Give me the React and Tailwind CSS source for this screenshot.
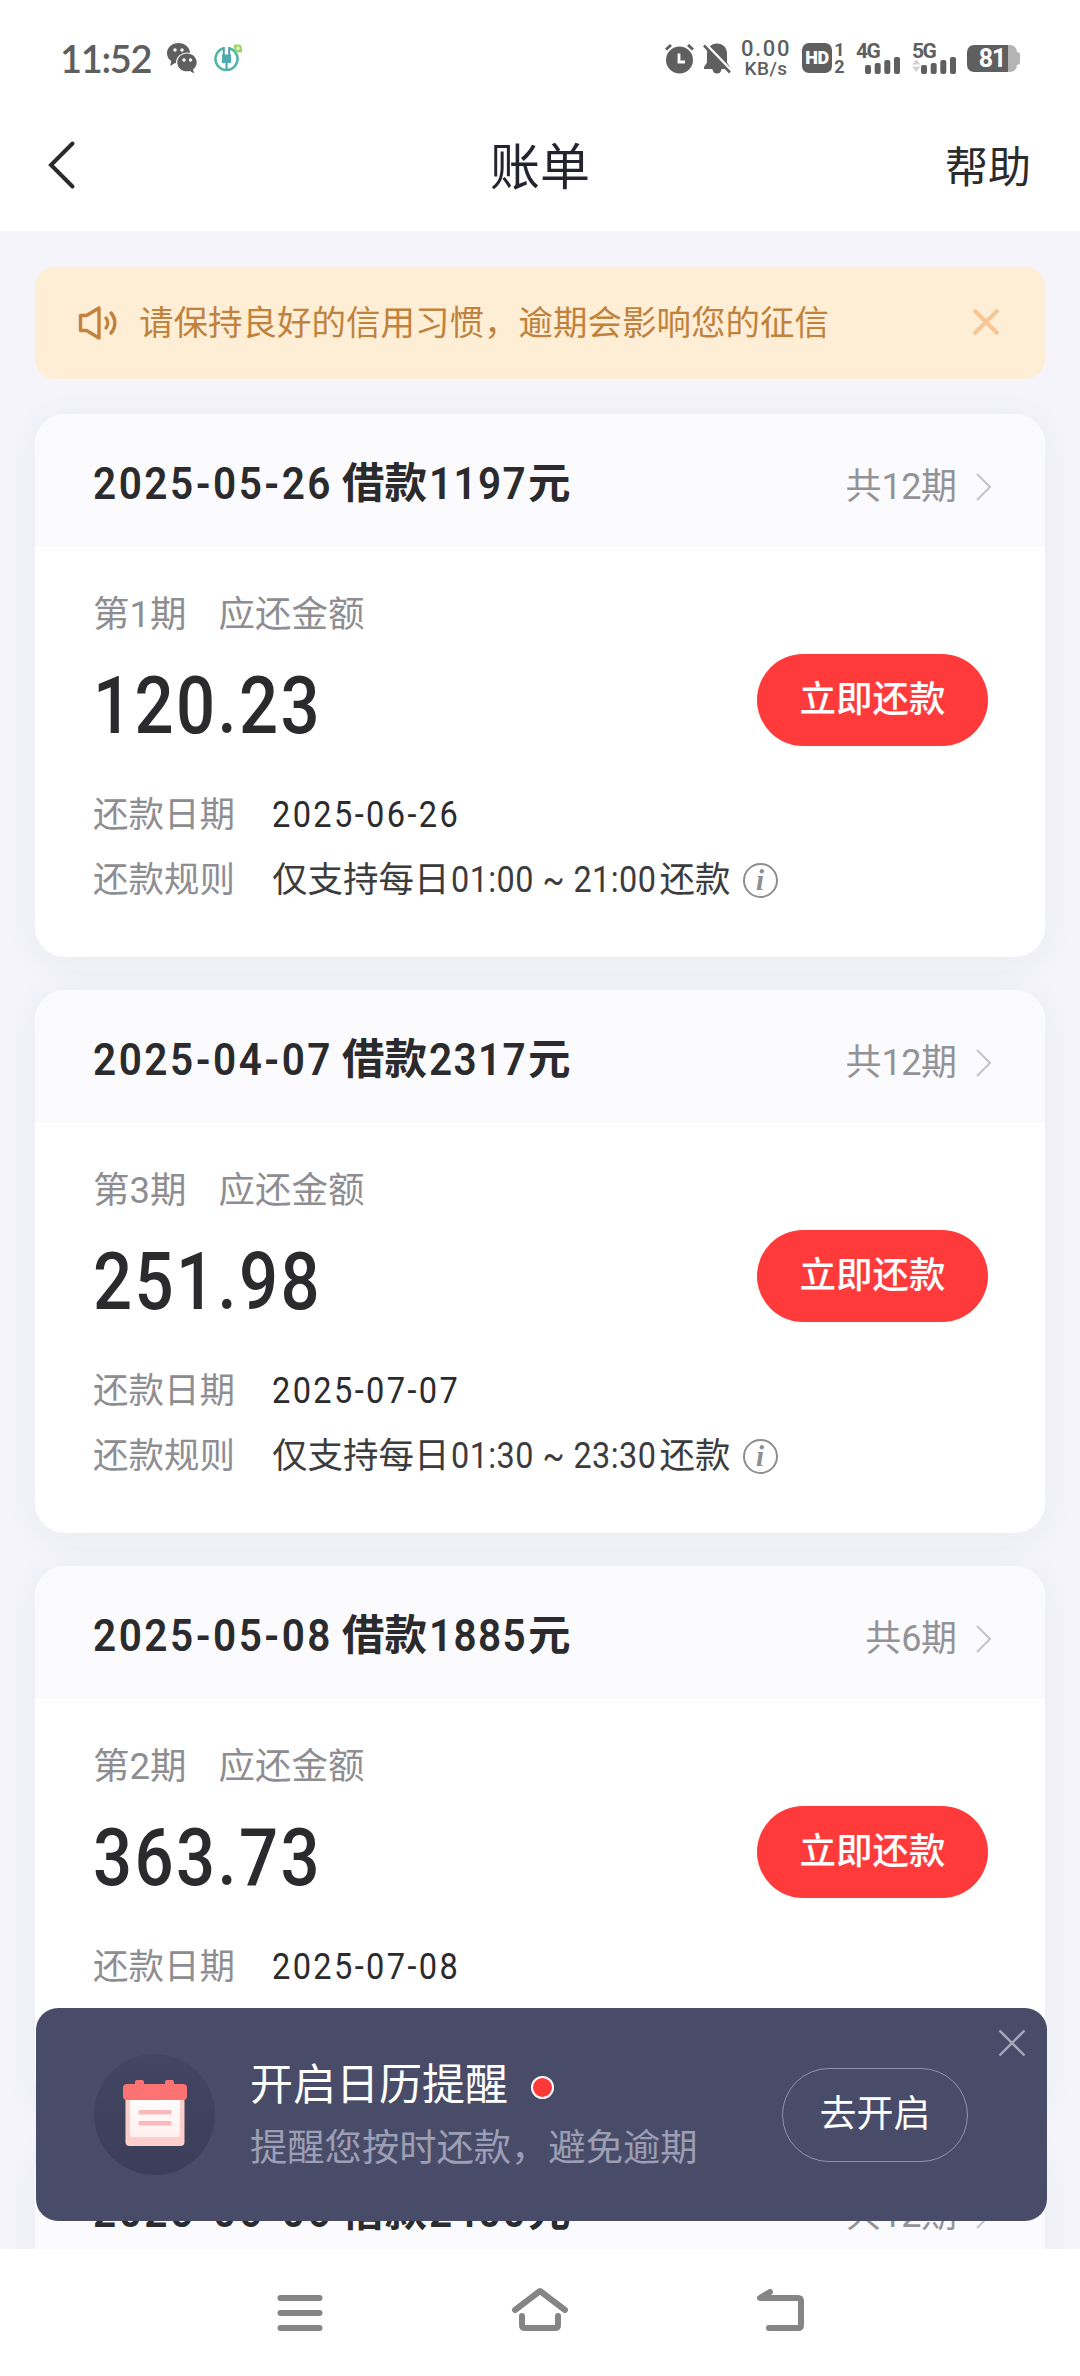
import { useState } from 'react';

const bills = [
  {
    id: 1,
    date: '2025-05-26',
    loan: 1197,
    total: 12,
    period: 1,
    amount: '120.23',
    dueDate: '2025-06-26',
    from: '01:00',
    to: '21:00',
  },
  {
    id: 2,
    date: '2025-04-07',
    loan: 2317,
    total: 12,
    period: 3,
    amount: '251.98',
    dueDate: '2025-07-07',
    from: '01:30',
    to: '23:30',
  },
  {
    id: 3,
    date: '2025-05-08',
    loan: 1885,
    total: 6,
    period: 2,
    amount: '363.73',
    dueDate: '2025-07-08',
    from: '01:00',
    to: '21:00',
  },
  {
    id: 4,
    date: '2025-06-06',
    loan: 2400,
    total: 12,
    period: 1,
    amount: '226.50',
    dueDate: '2025-07-06',
    from: '01:00',
    to: '21:00',
  },
];

function SignalBars() {
  return (
    <svg width="35" height="17" viewBox="0 0 35 17" fill="#5f5f5f">
      <rect x="0" y="8" width="6" height="9" rx="2" />
      <rect x="9.7" y="6" width="6" height="11" rx="2" />
      <rect x="19.3" y="3" width="6" height="14" rx="2" />
      <rect x="29" y="0" width="6" height="17" rx="2" />
    </svg>
  );
}

function Network({ label, traffic }) {
  return (
    <div className="flex w-[45px] flex-col">
      <span className="h-[14px] text-[21px] font-bold leading-[16px] tracking-[-1.5px]">{label}</span>
      <div className="flex">
        <svg width="9" height="17" viewBox="0 0 9 17" fill="#d2d2d2">
          {traffic && <path d="M0 7.500L4.200 2.500 8.500 7.500zM0 9.500L4.200 15 8.500 9.500z" />}
        </svg>
        <SignalBars />
      </div>
    </div>
  );
}

function StatusBar() {
  return (
    <div className="flex h-[116px] items-center pl-[60px] pr-[60px] text-[#5f5f5f]">
      <span className="w-[93px] font-['Lato','Noto_Sans_CJK_SC',sans-serif] text-[38px] font-semibold leading-[40px] tracking-[-1.300px]">
        11:52
      </span>
      <svg className="ml-[13px]" width="32" height="32" viewBox="0 0 32 32" fill="#5f5f5f">
        <path d="M12.500 1C6 1 1 5.500 1 11.200c0 3.200 1.600 5.900 4.200 7.800L4.200 24l5-3c1.100.3 2.200.4 3.300.4 6.500 0 11.500-4.500 11.500-10.200S19 1 12.500 1z" />
        <ellipse cx="21" cy="20.500" rx="11" ry="10" fill="#fff" />
        <path d="M21 11.500c-5.500 0-9.700 3.900-9.700 8.900s4.200 8.900 9.700 8.900c1 0 2-.1 3-.4l4 2.600-.9-4.200c2.200-1.700 3.600-4.100 3.600-6.900 0-5-4.200-8.900-9.700-8.900z" />
        <circle cx="9" cy="8" r="1.700" fill="#fff" />
        <circle cx="16" cy="8" r="1.700" fill="#fff" />
        <circle cx="18" cy="18" r="1.700" fill="#fff" />
        <circle cx="24.500" cy="18" r="1.700" fill="#fff" />
      </svg>
      <svg className="ml-[16px]" width="30" height="30" viewBox="0 0 30 30" fill="none">
        <path d="M9 5.500a11 11 0 1 0 7 0" stroke="#52b5a8" strokeWidth="2.600" />
        <path d="M9.800 4v9M15.200 4v9M12.500 18v9" stroke="#4f9fb0" strokeWidth="2" />
        <rect x="8" y="11.500" width="9" height="8.500" fill="#4fabb0" />
        <path d="M20 1.500h4a4 4 0 0 1 4 4V9.500h-3.500a4.500 4.500 0 0 1-4.500-4.500z" fill="#9bd964" />
        <circle cx="24" cy="5.300" r="1.700" fill="#e4f7cf" />
      </svg>

      <div className="ml-auto flex items-center">
        <svg width="31" height="31" viewBox="0 0 31 31">
          <circle cx="15.500" cy="17" r="13.500" fill="#5f5f5f" />
          <path d="M2 6.500l5-4.500M29 6.500l-5-4.500" stroke="#5f5f5f" strokeWidth="3" />
          <path d="M15 10.500v8.500h6" stroke="#fff" strokeWidth="2.800" fill="none" />
        </svg>
        <svg className="ml-[8px]" width="28" height="31" viewBox="0 0 28 31">
          <path d="M14 .5c5.800 0 10 4.200 10 10v9l3 4.500v2H1v-2l3-4.500v-9c0-5.800 4.200-10 10-10z" fill="#5f5f5f" />
          <path d="M9.500 26h9a4.500 4.500 0 0 1-9 0z" fill="#5f5f5f" />
          <path d="M3 1.500l26 27" stroke="#fff" strokeWidth="3" />
          <path d="M1 2.500l26 27" stroke="#5f5f5f" strokeWidth="2.600" />
        </svg>
        <div className="ml-[9px] flex w-[52px] flex-col items-center">
          <span className="text-[22px] font-medium leading-[20px] tracking-[1.600px]">0.00</span>
          <span className="text-[19px] font-medium leading-[19px] tracking-[0.500px]">KB/s</span>
        </div>
        <span className="ml-[10px] flex h-[30px] w-[30px] items-center justify-center rounded-[7px] bg-[#5f5f5f] text-[18px] font-black leading-none tracking-[-0.500px] text-white">
          HD
        </span>
        <div className="ml-[2px] flex w-[11px] flex-col items-center text-[18px] font-bold leading-[17px]">
          <span>1</span>
          <span>2</span>
        </div>
        <div className="ml-[11px] flex gap-[11px]">
          <Network label="4G" />
          <Network label="5G" traffic />
        </div>
        <div className="ml-[10px] flex items-center">
          <span className="flex h-[27px] w-[50px] items-center justify-center rounded-[7px] bg-linear-to-r from-[#5f5f5f] from-82% to-[#b4b4b4] to-82% text-[25px] font-bold leading-none tracking-[-1px] text-white">
            81
          </span>
          <span className="h-[13px] w-[3px] rounded-r-full bg-[#b4b4b4]" />
        </div>
      </div>
    </div>
  );
}

function Header() {
  return (
    <header className="grid h-[115px] grid-cols-3 items-center px-[48px] pb-[12px]">
      <svg className="mb-[5px]" width="28" height="50" viewBox="0 0 28 50" fill="none" stroke="#2b2b2d" strokeWidth="4" strokeLinecap="round">
        <path d="M24.500 3.500L3 25l21.500 21.500" />
      </svg>
      <h1 className="text-center text-[50px] leading-[60px] text-[#24242f]">账单</h1>
      <span className="mr-[1px] text-right text-[43px] leading-[60px] text-[#2b2b2d]">帮助</span>
    </header>
  );
}

function Notice() {
  return (
    <div className="flex h-[112px] items-center rounded-[20px] bg-[#feeed6] pl-[42px] pr-[45px] text-[#c0823c]">
      <svg width="42" height="36" viewBox="0 0 42 36" fill="none" stroke="#c0823c" strokeWidth="3.400" strokeLinejoin="round" strokeLinecap="round">
        <path d="M3.500 10.500h6L22 3v30L9.500 25.500h-6z" />
        <path d="M29 13a8 8 0 0 1 0 10M34 8a15 15 0 0 1 0 20" />
      </svg>
      <span className="ml-[20px] text-[34.500px] leading-[50px]">请保持良好的信用习惯，逾期会影响您的征信</span>
      <svg className="mb-[3px] ml-auto" width="28" height="28" viewBox="0 0 28 28" stroke="#f6c795" strokeWidth="4">
        <path d="M2 2l24 24M26 2L2 26" />
      </svg>
    </div>
  );
}

function BillCard({ bill }) {
  return (
    <section className="h-[543px] shrink-0 overflow-hidden rounded-[30px] bg-white shadow-[0_6px_36px_rgba(60,60,90,0.05)]">
      <div className="flex h-[133px] items-center justify-between bg-[#fbfbfd] pl-[58px] pr-[52px]">
        <h2 className="flex items-center whitespace-nowrap pt-[6px] text-[42.500px] font-semibold leading-[60px] text-[#2b2b2d]">
          <span className="w-[249px] origin-left scale-x-90 text-[45px] tracking-[2.800px]">{bill.date}</span>
          <span>借款</span>
          <span className="ml-[2px] w-[99px] origin-left scale-x-90 text-[45px] tracking-[1.500px]">{bill.loan}</span>
          <span>元</span>
        </h2>
        <div className="flex items-center pt-[13px] text-[36px] leading-[50px] text-[#939397]">
          <span>
            共<span className="tracking-[-0.500px]">{bill.total}</span>期
          </span>
          <svg className="ml-[18px]" width="18" height="30" viewBox="0 0 18 30" fill="none" stroke="#c4c4c8" strokeWidth="2">
            <path d="M2 2l13 13L2 28" />
          </svg>
        </div>
      </div>

      <div className="flex h-[167px] justify-between pl-[58px] pr-[57px] pt-[43px]">
        <div>
          <div className="flex gap-[32px] text-[36.500px] leading-[50px] text-[#8e8e92]">
            <span>第{bill.period}期</span>
            <span>应还金额</span>
          </div>
          <div className="mt-[20px] origin-left scale-x-[0.860] text-[80px] font-medium leading-[92px] tracking-[2.800px] text-[#2b2b2d]">
            {bill.amount}
          </div>
        </div>
        <button className="mt-[64px] h-[92px] w-[231px] rounded-full bg-[#ff3a3a] text-[36.500px] font-medium leading-[50px] text-white">
          立即还款
        </button>
      </div>

      <dl className="grid grid-cols-[179px_1fr] gap-y-[15px] pl-[58px] pt-[76px] text-[35.500px] leading-[50px]">
        <dt className="text-[#8e8e92]">还款日期</dt>
        <dd className="origin-left scale-x-[0.880] text-[37px] tracking-[2.700px] text-[#2b2b2d]">{bill.dueDate}</dd>
        <dt className="text-[#8e8e92]">还款规则</dt>
        <dd className="flex items-center whitespace-nowrap text-[#3c3c3e]">
          <span>仅支持每日</span>
          <span className="ml-[1px] w-[209px] origin-left scale-x-90 text-[36px] tracking-[0.500px]">
            {bill.from} ~ {bill.to}
          </span>
          <span>还款</span>
          <span className="ml-[12px] flex size-[35px] items-center justify-center rounded-full border-[2.500px] border-[#8e8e92] font-['Liberation_Serif',serif] text-[29px] font-bold italic leading-none text-[#8e8e92]">
            i
          </span>
        </dd>
      </dl>
    </section>
  );
}

function CalendarBanner({ onClose }) {
  return (
    <div className="absolute left-[36px] top-[2008px] flex h-[213px] w-[1011px] items-center rounded-[22px] bg-[#494c69] pl-[58px] pr-[79px]">
      <svg width="121" height="121" viewBox="0 0 121 121">
        <defs>
          <linearGradient id="disc" x1="0" y1="0" x2="0" y2="1">
            <stop offset="0" stopColor="#434662" />
            <stop offset="1" stopColor="#3b3d59" />
          </linearGradient>
          <linearGradient id="sheet" x1="0" y1="0" x2="0" y2="1">
            <stop offset="0" stopColor="#ffffff" />
            <stop offset="1" stopColor="#fff0ef" />
          </linearGradient>
        </defs>
        <circle cx="60.500" cy="60.500" r="60.500" fill="url(#disc)" />
        <rect x="31.500" y="34" width="59" height="58" rx="4" fill="#fdcfcc" />
        <rect x="36" y="40" width="50" height="43" rx="3" fill="url(#sheet)" />
        <rect x="41" y="26" width="9" height="12" rx="2" fill="#fd7272" />
        <rect x="71" y="26" width="9" height="12" rx="2" fill="#fd7272" />
        <rect x="29" y="30" width="64" height="16" rx="4" fill="#fd7272" />
        <rect x="44.500" y="56" width="33" height="4.500" rx="1" fill="#f7b9b9" />
        <rect x="44.500" y="67" width="33" height="4.500" rx="1" fill="#f7b9b9" />
      </svg>
      <div className="ml-[35px] flex flex-col">
        <div className="flex items-center text-[43px] leading-[60px] text-white">
          <span>开启日历提醒</span>
          <span className="ml-[23px] mt-[6px] size-[23px] rounded-full border-2 border-white bg-[#ff3838]" />
        </div>
        <span className="mt-[6px] text-[37.300px] leading-[54px] text-[#9c9eb4]">提醒您按时还款，避免逾期</span>
      </div>
      <button className="ml-auto h-[94px] w-[186px] rounded-full border border-[#9193a8] text-[37px] leading-[50px] text-white">去开启</button>
      <button className="absolute right-[21px] top-[21px]" onClick={onClose} aria-label="关闭">
        <svg width="28" height="28" viewBox="0 0 28 28" stroke="#a7a9bb" strokeWidth="2.400">
          <path d="M1.500 1.500l25 25M26.500 1.500l-25 25" />
        </svg>
      </button>
    </div>
  );
}

function NavBar() {
  return (
    <nav className="flex h-[127px] shrink-0 items-start justify-center gap-[184px] bg-white pt-[36px]">
      <svg width="56" height="50" viewBox="0 0 56 50" fill="none" stroke="#858585" strokeWidth="6" strokeLinecap="round">
        <path d="M10.500 13h39M10.500 28h39M10.500 43h39" />
      </svg>
      <svg width="60" height="50" viewBox="0 0 60 50" fill="none" stroke="#858585" strokeWidth="6" strokeLinecap="round" strokeLinejoin="round">
        <path d="M5 25L30 6l25 19" />
        <path d="M12 31v9q0 3 3 3h30q3 0 3-3v-9" />
      </svg>
      <svg width="56" height="50" viewBox="0 0 56 50" fill="none" stroke="#858585" strokeWidth="6" strokeLinecap="round" strokeLinejoin="round">
        <path d="M16 7L6 13h38q3 0 3 3v24q0 3-3 3H15" />
      </svg>
    </nav>
  );
}

export default function App() {
  const [showBanner, setShowBanner] = useState(true);

  return (
    <div className="relative flex h-[2376px] w-[1080px] flex-col overflow-hidden bg-white font-['Roboto','Noto_Sans_CJK_SC',sans-serif]">
      <StatusBar />
      <Header />
      <main className="min-h-0 flex-1 overflow-hidden bg-[#f4f4fa] px-[35px] pt-[36px]">
        <Notice />
        <div className="mt-[35px] flex flex-col gap-[33px]">
          {bills.map((bill) => (
            <BillCard key={bill.id} bill={bill} />
          ))}
        </div>
      </main>
      <NavBar />
      {showBanner && <CalendarBanner onClose={() => setShowBanner(false)} />}
    </div>
  );
}
